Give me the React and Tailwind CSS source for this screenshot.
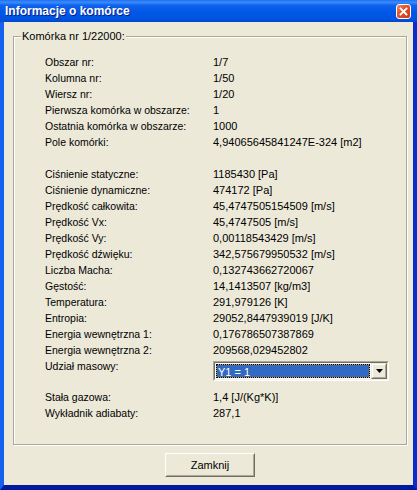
import React from 'react';

const block1 = [
  ['Obszar nr:', '1/7'],
  ['Kolumna nr:', '1/50'],
  ['Wiersz nr:', '1/20'],
  ['Pierwsza komórka w obszarze:', '1'],
  ['Ostatnia komórka w obszarze:', '1000'],
  ['Pole komórki:', '4,94065645841247E-324 [m2]'],
];

const block2 = [
  ['Ciśnienie statyczne:', '1185430 [Pa]'],
  ['Ciśnienie dynamiczne:', '474172 [Pa]'],
  ['Prędkość całkowita:', '45,4747505154509 [m/s]'],
  ['Prędkość Vx:', '45,4747505 [m/s]'],
  ['Prędkość Vy:', '0,00118543429 [m/s]'],
  ['Prędkość dźwięku:', '342,575679950532 [m/s]'],
  ['Liczba Macha:', '0,132743662720067'],
  ['Gęstość:', '14,1413507 [kg/m3]'],
  ['Temperatura:', '291,979126 [K]'],
  ['Entropia:', '29052,8447939019 [J/K]'],
  ['Energia wewnętrzna 1:', '0,176786507387869'],
  ['Energia wewnętrzna 2:', '209568,029452802'],
];

const block3 = [
  ['Stała gazowa:', '1,4 [J/(Kg*K)]'],
  ['Wykładnik adiabaty:', '287,1'],
];

function Row({ label, value }) {
  return (
    <div className="grid grid-cols-[168px_1fr] h-4 leading-4">
      <span className="text-[10.5px]">{label}</span>
      <span className="text-[11px]">{value}</span>
    </div>
  );
}

function Combo() {
  return (
    <div className="mt-[3px] w-[176px] h-[20px] border border-t-[#ACA899] border-l-[#ACA899] border-r-white border-b-white">
      <div className="h-full flex bg-white border border-t-[#716F64] border-l-[#716F64] border-r-[#F1EFE2] border-b-[#F1EFE2]">
        <div className="flex-1 p-[1px]">
          <div className="h-full bg-[#D9A33C]">
            <div className="h-full border border-dotted border-black bg-[#316AC5] bg-clip-padding text-white text-[11px] leading-[14px] pl-[1px]">
              Y1 = 1
            </div>
          </div>
        </div>
        <div className="w-[16px] h-full bg-[#ECE9D8] border border-t-[#ECE9D8] border-l-[#ECE9D8] border-r-[#716F64] border-b-[#716F64]">
          <div className="h-full flex items-center justify-center border border-t-white border-l-white border-r-[#ACA899] border-b-[#ACA899]">
            <svg width="7" height="4" viewBox="0 0 7 4">
              <path d="M0 0h7L3.5 4z" fill="#000" />
            </svg>
          </div>
        </div>
      </div>
    </div>
  );
}

export default function App() {
  return (
    <div className="w-[417px] h-[490px] flex flex-col bg-[#0831D9] text-black font-['Liberation_Sans',Arial,sans-serif]">
      {/* Title bar */}
      <div className="h-[22px] flex items-center justify-between pl-[5px] pr-[6px] bg-[linear-gradient(to_bottom,#1D6FF5_0%,#3B8CF8_10%,#0F62EE_25%,#0057E6_55%,#0053E0_85%,#0046CC_100%)]">
        <span className="text-white font-bold text-[12px] leading-none [text-shadow:1px_1px_0_#0A1E8C]">
          Informacje o komórce
        </span>
        <div className="w-[15px] h-[15px] rounded-[3px] border border-white bg-[linear-gradient(135deg,#F08B6A_0%,#E2542B_40%,#C8381A_100%)] flex items-center justify-center">
          <svg width="9" height="9" viewBox="0 0 9 9">
            <path d="M1.5 1.5l6 6M7.5 1.5l-6 6" stroke="#fff" strokeWidth="1.8" strokeLinecap="square" />
          </svg>
        </div>
      </div>

      {/* Frame + client */}
      <div className="flex-1 flex border-l-[4px] border-l-[#1660EE] border-r-[4px] border-r-[#0A2CC9] border-b-[5px] border-b-[#001A9C]">
        <div className="flex-1 bg-[#ECE9D8] flex flex-col">
          <div className="relative mt-[14px] ml-[9px] w-[394px] h-[409px] border border-[#ACA899] shadow-[inset_1px_1px_0_#fff,1px_1px_0_#fff] pt-[17px] pl-[31px]">
            <span className="absolute -top-[7px] left-[7px] px-[1px] bg-[#ECE9D8] text-[11px] leading-[13px]">
              Komórka nr 1/22000:
            </span>
            {block1.map(([l, v]) => (
              <Row key={l} label={l} value={v} />
            ))}
            <div className="h-4" />
            {block2.map(([l, v]) => (
              <Row key={l} label={l} value={v} />
            ))}
            <div className="grid grid-cols-[168px_1fr] h-[31px]">
              <span className="text-[10.5px] leading-4">Udział masowy:</span>
              <Combo />
            </div>
            {block3.map(([l, v]) => (
              <Row key={l} label={l} value={v} />
            ))}
          </div>

          <div className="mt-[8px] ml-[161px] w-[90px] h-[24px] border border-t-white border-l-white border-r-[#716F64] border-b-[#716F64]">
            <div className="h-full flex items-center justify-center border border-t-[#ECE9D8] border-l-[#ECE9D8] border-r-[#ACA899] border-b-[#ACA899] text-[11px]">
              Zamknij
            </div>
          </div>
        </div>
      </div>
    </div>
  );
}
